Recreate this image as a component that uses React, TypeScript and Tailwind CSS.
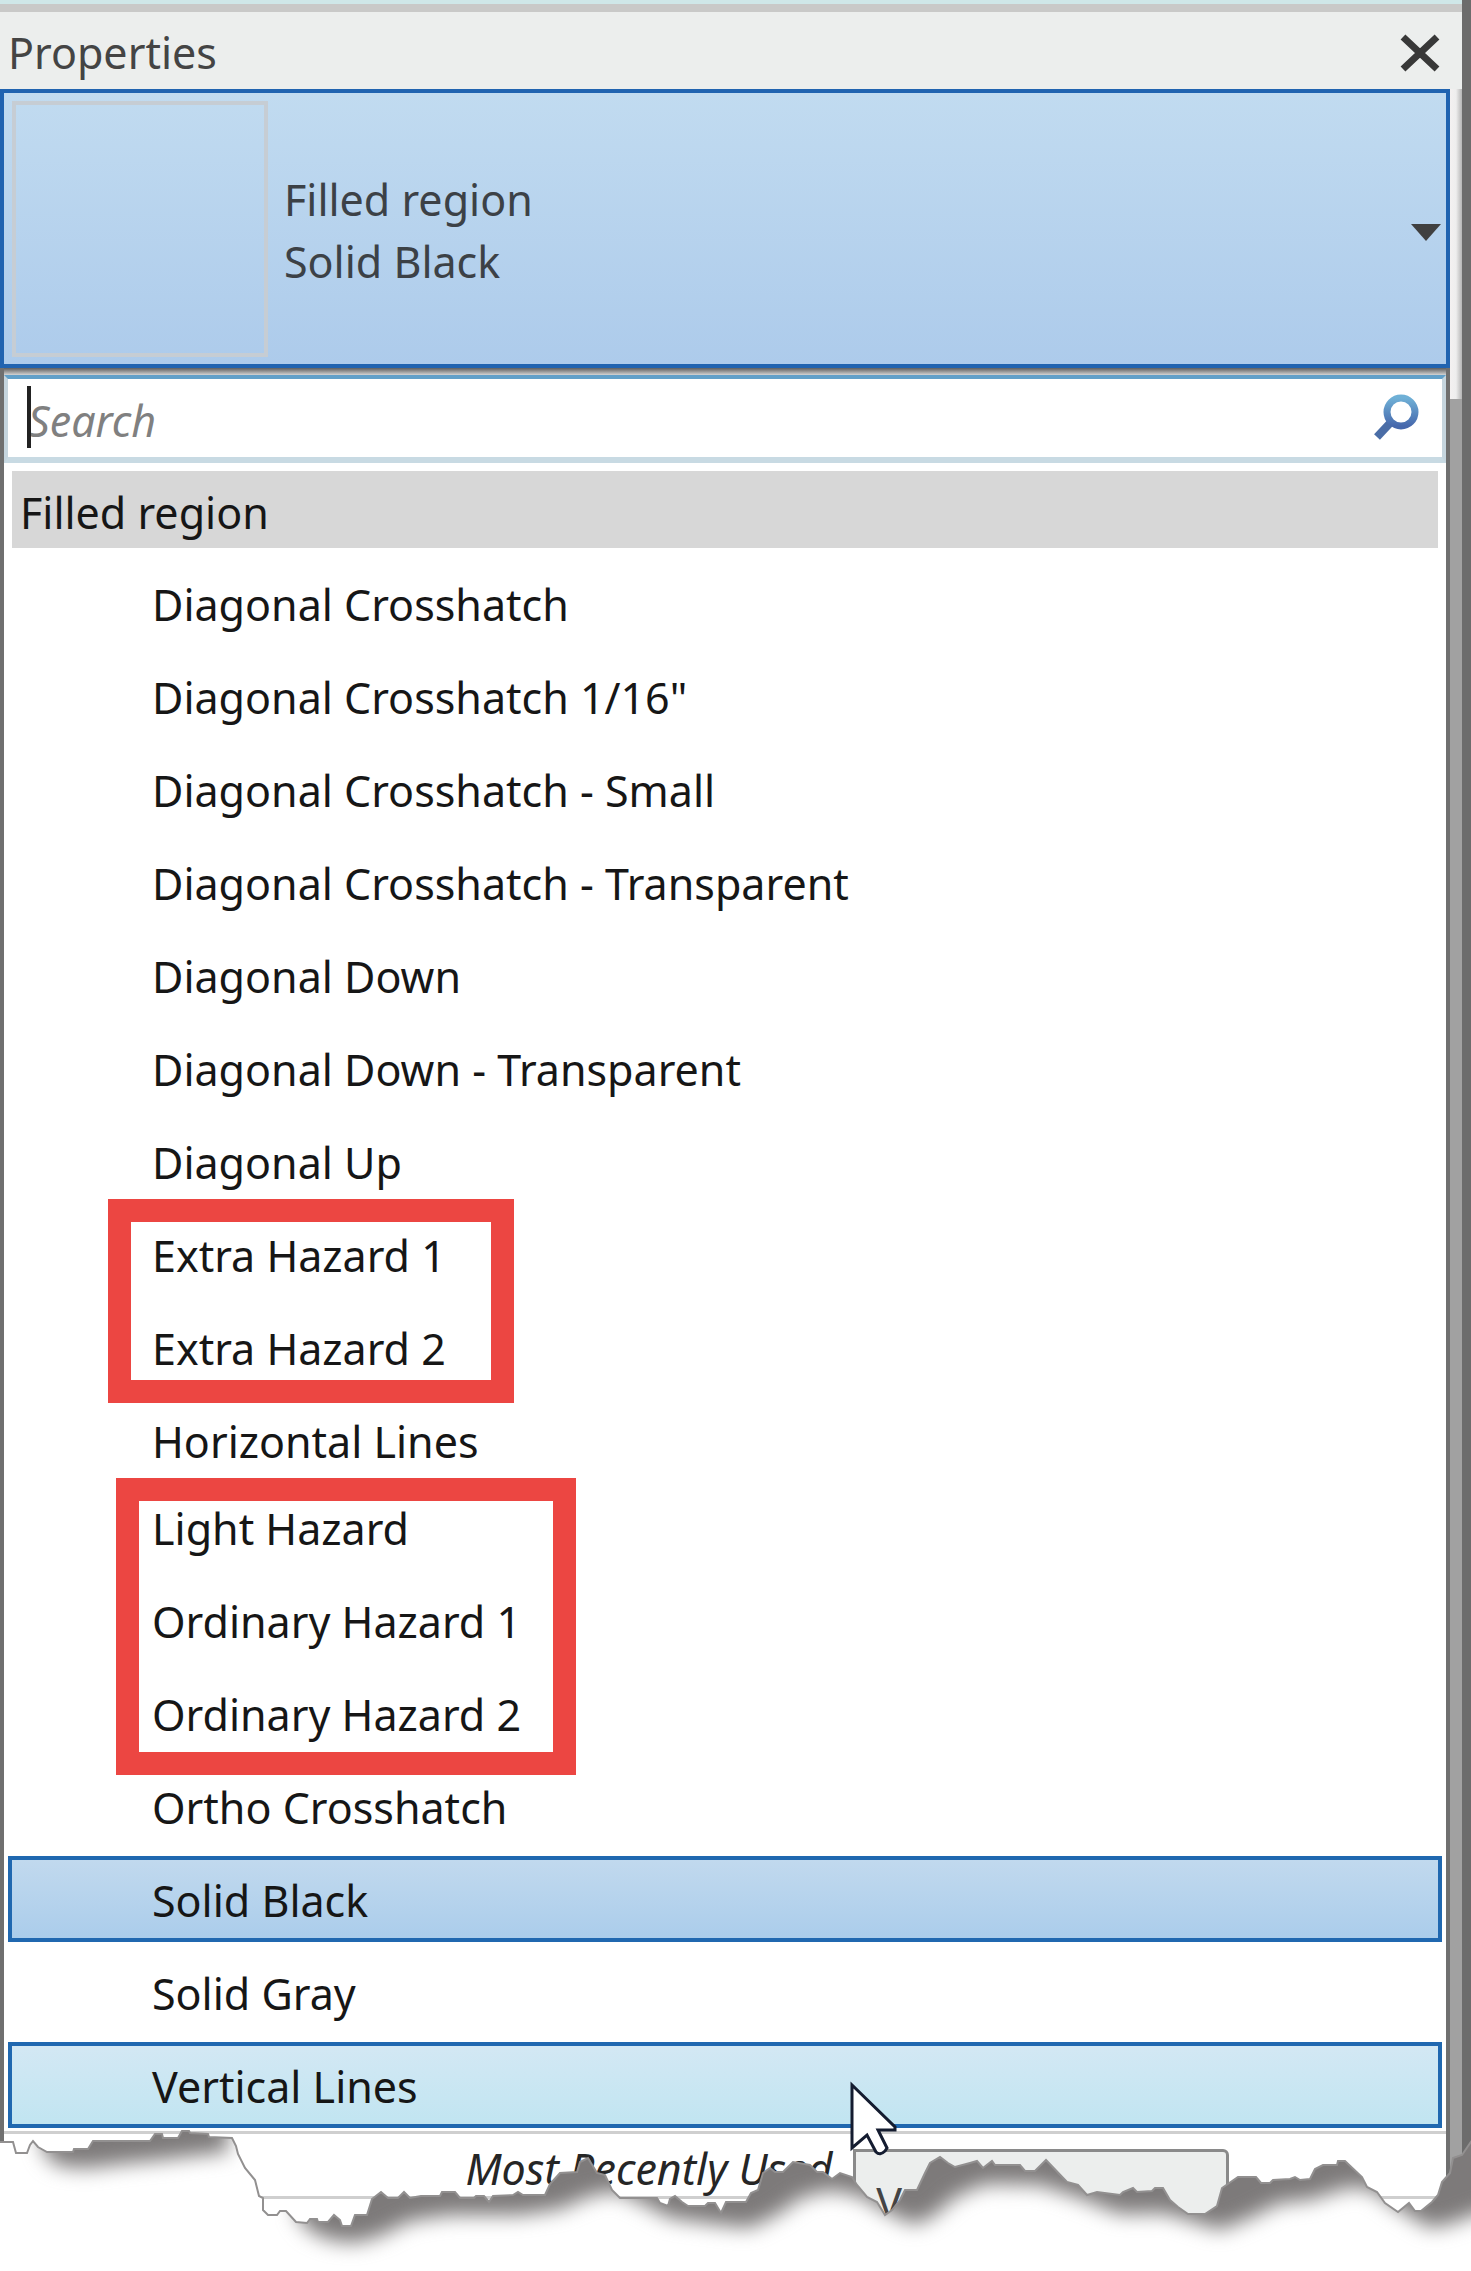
import { useState } from 'react';

type Group = {
  items: string[];
  marked?: 'narrow' | 'wide';
};

const groups: Group[] = [
  {
    items: [
      'Diagonal Crosshatch',
      'Diagonal Crosshatch 1/16"',
      'Diagonal Crosshatch - Small',
      'Diagonal Crosshatch - Transparent',
      'Diagonal Down',
      'Diagonal Down - Transparent',
      'Diagonal Up',
    ],
  },
  { items: ['Extra Hazard 1', 'Extra Hazard 2'], marked: 'narrow' },
  { items: ['Horizontal Lines'] },
  { items: ['Light Hazard', 'Ordinary Hazard 1', 'Ordinary Hazard 2'], marked: 'wide' },
  { items: ['Ortho Crosshatch', 'Solid Black', 'Solid Gray', 'Vertical Lines'] },
];

const TORN_EDGE =
  'M-4 2142 L13 2142 L16 2153 L27 2153 L30 2145 L33 2141 L38 2147 L47 2152 L73 2152 L74 2149 L88 2149 L93 2141 L150 2141 L155 2134 L162 2134 L163 2138 L178 2138 L182 2131 L189 2131 L190 2133 L208 2134 L209 2137 L232 2138 L236 2146 L238 2154 L245 2168 L255 2180 L259 2196 L263 2198 L263 2210 L268 2215 L277 2215 L280 2211 L286 2211 L296 2222 L307 2223 L310 2219 L317 2219 L318 2222 L328 2222 L334 2215 L340 2220 L342 2226 L351 2226 L355 2215 L367 2215 L372 2199 L381 2192 L388 2198 L398 2198 L404 2192 L410 2198 L421 2196 L440 2196 L442 2192 L455 2192 L460 2198 L474 2198 L476 2196 L484 2196 L489 2202 L493 2196 L513 2195 L518 2192 L523 2195 L545 2195 L550 2184 L560 2173 L577 2172 L580 2162 L588 2158 L597 2173 L605 2175 L612 2190 L620 2198 L657 2198 L660 2203 L668 2206 L670 2199 L675 2196 L682 2202 L688 2206 L705 2206 L708 2203 L715 2203 L721 2213 L726 2202 L746 2202 L751 2193 L758 2190 L763 2173 L770 2168 L775 2172 L783 2172 L793 2162 L810 2165 L817 2172 L823 2172 L832 2179 L840 2173 L852 2177 L857 2185 L867 2197 L877 2202 L885 2215 L892 2210 L900 2200 L905 2190 L917 2190 L925 2173 L930 2163 L940 2157 L948 2163 L955 2167 L970 2163 L977 2161 L983 2168 L992 2161 L995 2165 L1020 2165 L1025 2171 L1035 2171 L1046 2160 L1067 2182 L1078 2185 L1087 2195 L1097 2192 L1120 2195 L1123 2192 L1133 2188 L1137 2192 L1152 2191 L1155 2188 L1163 2188 L1170 2200 L1178 2207 L1188 2214 L1205 2214 L1217 2206 L1222 2188 L1238 2177 L1256 2177 L1261 2183 L1270 2183 L1273 2180 L1290 2179 L1295 2177 L1300 2180 L1310 2179 L1315 2169 L1323 2165 L1337 2165 L1338 2161 L1345 2161 L1362 2177 L1367 2187 L1377 2192 L1385 2203 L1398 2212 L1409 2203 L1415 2211 L1421 2211 L1432 2202 L1438 2195 L1442 2182 L1450 2173 L1453 2158 L1462 2155 L1475 2136';

const TORN_SHADOW =
  'M42 2110 L42 2148 L52 2162 L65 2167 L90 2168 L120 2164 L160 2160 L200 2155 L228 2152 L228 2110 Z ' +
  'M297 2190 L297 2216 L310 2231 L330 2240 L355 2243 L380 2236 L410 2221 L450 2215 L520 2215 L560 2209 L590 2196 L615 2191 L640 2202 L670 2218 L720 2225 L750 2228 L780 2213 L800 2198 L830 2190 L860 2196 L890 2214 L915 2225 L935 2215 L955 2197 L985 2184 L1040 2185 L1080 2198 L1120 2214 L1165 2213 L1220 2230 L1250 2218 L1280 2203 L1310 2200 L1350 2187 L1372 2190 L1400 2210 L1430 2228 L1450 2224 L1500 2205 L1500 2110 L1290 2120 L297 2120 Z';

function TornEdge() {
  return (
    <svg
      className="pointer-events-none absolute inset-x-0 bottom-0 h-[161px] w-full"
      viewBox="0 2110 1471 161"
      preserveAspectRatio="none"
      aria-hidden="true"
    >
      <defs>
        <clipPath id="below-edge">
          <path d={`${TORN_EDGE} L1475 2280 L-4 2280 Z`} />
        </clipPath>
        <filter id="soften" x="-5%" y="-30%" width="110%" height="160%" colorInterpolationFilters="sRGB">
          <feGaussianBlur stdDeviation="10" />
        </filter>
      </defs>
      <g clipPath="url(#below-edge)">
        <rect x="-4" y="2110" width="1480" height="170" fill="#fff" />
        <path d={TORN_SHADOW} fill="#7d7a7a" filter="url(#soften)" />
      </g>
      <path d={TORN_EDGE} fill="none" stroke="#929090" strokeWidth="2" />
    </svg>
  );
}

function Row({ name, selected, hovered, onPick }: {
  name: string;
  selected: boolean;
  hovered: boolean;
  onPick: () => void;
}) {
  let look = 'border-transparent';
  if (selected) look = 'border-[#2068b0] bg-gradient-to-b from-[#c1d9ee] to-[#abcdeb]';
  else if (hovered) look = 'border-[#2068b0] bg-gradient-to-b from-[#d3e8f4] to-[#c1e5f1]';

  return (
    <li className="h-[93px] pb-[7px]">
      <button
        type="button"
        onClick={onPick}
        className={`flex h-full w-full items-center border-4 pt-1 pl-[140px] text-left text-[#161616] ${look}`}
      >
        {name}
      </button>
    </li>
  );
}

export default function App() {
  const [selected, setSelected] = useState('Solid Black');

  return (
    <div className="relative flex min-h-screen overflow-hidden bg-white font-['Noto_Sans',sans-serif] text-[43px] leading-[62px]">
      <div className="flex min-w-0 flex-1 flex-col">
        {/* Title bar */}
        <div className="h-1 bg-[#cfe7e8]" />
        <div className="h-2 bg-[#c9c9c8]" />
        <header className="flex h-[77px] items-center justify-between bg-[#eceeed] pt-1 pr-[22px] pl-2 text-[#444]">
          <h1>Properties</h1>
          <button type="button" aria-label="Close">
            <svg width="40" height="40" viewBox="0 0 40 40" fill="none" stroke="#383838" strokeWidth="7">
              <path d="M3 4 L37 36 M37 4 L3 36" />
            </svg>
          </button>
        </header>

        <div className="flex flex-1">
          <div className="flex min-w-0 flex-1 flex-col">
            {/* Type selector */}
            <button
              type="button"
              className="flex h-[279px] items-center border-4 border-[#2063b0] bg-gradient-to-b from-[#c1dbf0] to-[#adcbeb] pr-1 pl-2 text-left text-[#3c4146]"
            >
              <span className="h-[256px] w-[256px] border-4 border-[#c6cdd4]" />
              <span className="flex-1 pt-1 pl-4">
                <span className="block">Filled region</span>
                <span className="block">Solid Black</span>
              </span>
              <svg className="mt-2" width="32" height="18" viewBox="0 0 32 18" fill="#404040" aria-hidden="true">
                <path d="M1 0 H31 L16 17 Z" />
              </svg>
            </button>

            {/* Drop-down list */}
            <div className="flex flex-1 flex-col border-x-4 border-[#6f6f6f]">
              <div className="h-[7px] bg-gradient-to-b from-[#5f5f5f] to-[#d4d4d4]" />
              <label className="relative flex h-[88px] items-center border-4 border-b-[6px] border-x-[#c5d5de] border-t-[#62a0c9] border-b-[#c8dae3] bg-white pr-5 pl-4">
                <input
                  type="text"
                  aria-label="Search"
                  placeholder="Search"
                  className="h-[78px] min-w-0 flex-1 pt-1 pl-1 italic outline-none placeholder:text-[#808080]"
                />
                <span className="absolute top-[7px] left-[19px] h-[62px] w-1 bg-[#222]" />
                <svg width="50" height="50" viewBox="0 0 50 50" fill="none" aria-hidden="true">
                  <defs>
                    <linearGradient id="lens" x1="0" y1="0" x2="0" y2="1">
                      <stop offset="0" stopColor="#6fb0d6" />
                      <stop offset="1" stopColor="#4668ac" />
                    </linearGradient>
                  </defs>
                  <path d="M20 28 L5 44" stroke="#4a6da6" strokeWidth="8" />
                  <circle cx="29" cy="19" r="14" stroke="url(#lens)" strokeWidth="7" />
                </svg>
              </label>

              <h2 className="mx-2 mt-2 flex h-[77px] items-center bg-[#d7d7d7] pt-1.5 pl-2 text-[#161616]">Filled region</h2>

              <div className="px-1 pt-3">
                {/* the second marked group sits slightly closer to the row before it */}
                {groups.map((group) => (
                  <div
                    key={group.items[0]}
                    className={group.marked === 'wide' ? 'relative -mt-1.5' : 'relative'}
                  >
                    <ul>
                      {group.items.map((name) => (
                        <Row
                          key={name}
                          name={name}
                          selected={name === selected}
                          hovered={name === 'Vertical Lines'}
                          onPick={() => setSelected(name)}
                        />
                      ))}
                    </ul>
                    {group.marked === 'narrow' && (
                      <div className="pointer-events-none absolute -top-3 -bottom-1.5 left-[100px] w-[406px] border-[23px] border-[#ec4642]" />
                    )}
                    {group.marked === 'wide' && (
                      <div className="pointer-events-none absolute -top-1.5 -bottom-3 left-[108px] w-[460px] border-[23px] border-[#ec4642]" />
                    )}
                  </div>
                ))}
              </div>

              <div className="-mt-1 h-[68px] border-y-[3px] border-[#cfcfcf] pt-1 pl-[32%] text-[#262626] italic">
                <p>Most Recently Used</p>
              </div>
            </div>
          </div>

          <div className="flex w-3 flex-col">
            <div className="h-[310px] bg-gradient-to-r from-[#f3f1f1] via-[#eeeeee] to-[#b5b5b5]" />
            <div className="flex-1 bg-[#a1a1a1]" />
          </div>
        </div>
      </div>
      <div className="w-[9px] bg-[#6c6c6c]" />

      {/* Tooltip of the hovered row, with the pointer over its corner */}
      <div className="absolute bottom-0 left-[58%] h-[122px] w-[376px] rounded-tr-md border-[3px] border-[#8a8a8a] bg-[#eceeed] px-5 pt-5 text-[#444]">
        Vertical Lines
      </div>
      <TornEdge />
      <svg
        className="absolute bottom-[113px] left-[58%] -ml-1"
        width="50"
        height="78"
        viewBox="0 0 50 78"
        fill="#fff"
        stroke="#141c30"
        strokeWidth="3"
        aria-hidden="true"
      >
        <path d="M3 5 V68 L18 55 L27 72 Q31 76 36 71 L38 68 L29 50 H46 V47 Z" />
      </svg>
    </div>
  );
}
